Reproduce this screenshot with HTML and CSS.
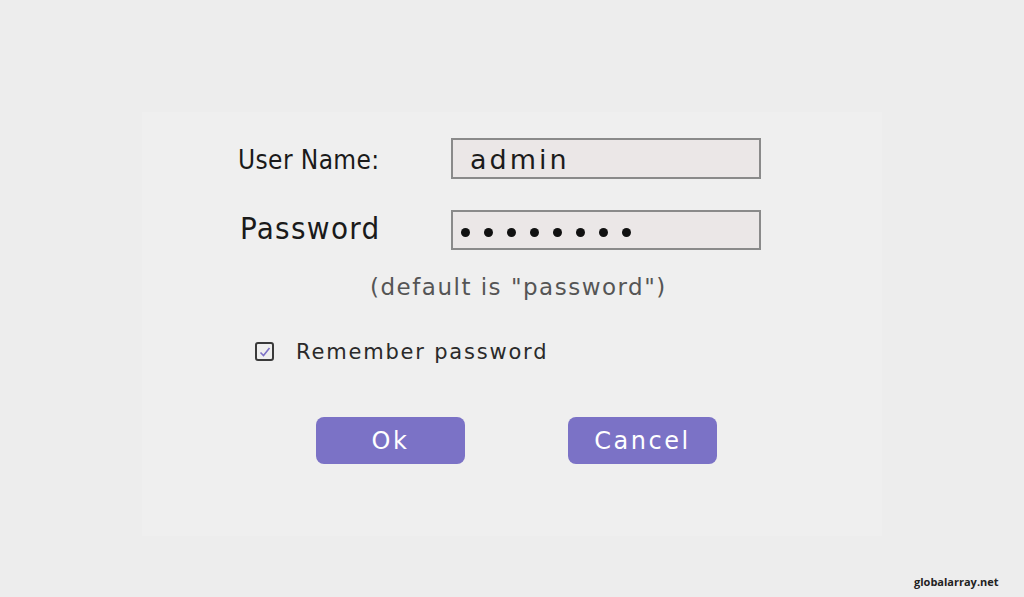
FILE: index.html
```html
<!DOCTYPE html>
<html lang="en">
<head>
  <meta charset="UTF-8">
  <title>Login</title>
  <link rel="stylesheet" href="styles.css">
</head>
<body>
  <!-- Login panel -->
  <div class="panel">
    <div class="field-row">
      <label class="label label-user">User Name:</label>
      <div class="input-box"><span class="input-text">admin</span></div>
    </div>
    <div class="field-row row-pass">
      <label class="label label-pass">Password</label>
      <div class="input-box input-pass">
        <span class="dot"></span><span class="dot"></span><span class="dot"></span><span class="dot"></span>
        <span class="dot"></span><span class="dot"></span><span class="dot"></span><span class="dot"></span>
      </div>
    </div>
    <div class="hint">(default is "password")</div>
    <div class="remember">
      <span class="checkbox">
        <svg width="14" height="14" viewBox="0 0 14 14"><path d="M2.5 7.5 L5.5 10.5 L11.5 3" fill="none" stroke="#7d72c6" stroke-width="1.6"/></svg>
      </span>
      <span class="remember-text">Remember password</span>
    </div>
    <div class="buttons">
      <button class="btn btn-ok">Ok</button>
      <button class="btn btn-cancel">Cancel</button>
    </div>
  </div>

  <div class="watermark">globalarray.net</div>
</body>
</html>
```

FILE: styles.css
```css
body, html {
  margin: 0;
  padding: 0;
  width: 100%;
  height: 100%;
  background: #ededed;
  font-family: "DejaVu Sans", sans-serif;
  overflow: hidden;
}

/* Faint inner panel */
.panel {
  box-sizing: border-box;
  width: 740px;
  height: 424px;
  margin: 112px 0 0 142px;
  padding: 26px 0 0 96px;
  background: #efefef;
}

.field-row {
  display: flex;
  align-items: center;
  height: 41px;
}

.row-pass {
  margin-top: 31px;
  height: 40px;
}

.label {
  box-sizing: border-box;
  width: 213px;
  color: #1a1a1a;
  font-stretch: condensed;
}

.label-user {
  font-size: 26px;
  letter-spacing: 0.4px;
  position: relative;
  top: 1px;
}

.label-pass {
  font-size: 31px;
  letter-spacing: 1.3px;
  padding-left: 2px;
  position: relative;
  top: -2px;
}

.input-box {
  box-sizing: border-box;
  width: 310px;
  height: 100%;
  border: 2px solid #8a8a8a;
  background: #ebe7e7;
  display: flex;
  align-items: center;
  padding-left: 17px;
}

.input-text {
  font-size: 27px;
  letter-spacing: 3px;
  color: #1c1c1c;
  position: relative;
  top: 1px;
}

.input-pass {
  padding-left: 8px;
  gap: 14px;
  padding-top: 5px;
}

.dot {
  width: 9px;
  height: 9px;
  border-radius: 50%;
  background: #111;
}

.hint {
  margin: 24px 0 0 132px;
  font-size: 23px;
  line-height: 27px;
  letter-spacing: 1.5px;
  color: #555;
}

.remember {
  display: flex;
  align-items: center;
  margin: 38px 0 0 17px;
}

.checkbox {
  box-sizing: border-box;
  width: 19px;
  height: 19px;
  border: 2px solid #3a3a3a;
  border-radius: 3px;
  display: flex;
  align-items: center;
  justify-content: center;
}

.remember-text {
  margin-left: 22px;
  font-size: 21px;
  line-height: 25px;
  letter-spacing: 1.8px;
  color: #2a2a2a;
  position: relative;
  top: 1px;
}

.buttons {
  display: flex;
  gap: 103px;
  margin: 53px 0 0 78px;
}

.btn {
  width: 149px;
  height: 47px;
  border: none;
  border-radius: 8px;
  background: #7b72c6;
  color: #fff;
  font-family: "DejaVu Sans", sans-serif;
  font-size: 24px;
  letter-spacing: 2.5px;
  padding: 0;
}

.watermark {
  position: absolute;
  left: 914px;
  top: 574px;
  font-family: "Open Sans", sans-serif;
  font-weight: bold;
  font-size: 11px;
  color: #222;
}
```
